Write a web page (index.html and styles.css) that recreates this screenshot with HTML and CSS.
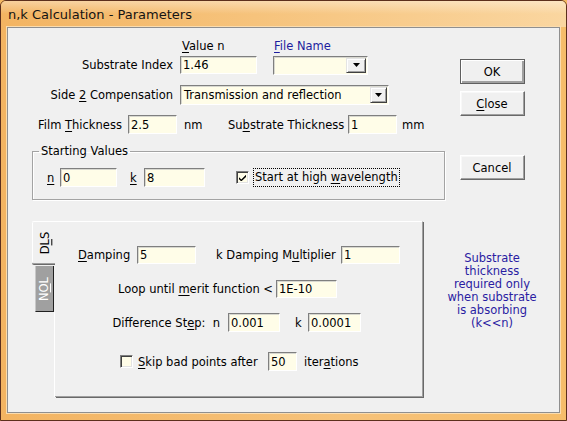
FILE: index.html
```html
<!DOCTYPE html>
<html>
<head>
<meta charset="utf-8">
<title>n,k Calculation - Parameters</title>
<link rel="stylesheet" href="styles.css">
</head>
<body>
<div class="window">
  <div class="titlebar"><span class="title">n,k Calculation - Parameters</span></div>
  <div class="frame">
    <div class="client">
      <div class="main">
        <div class="row r-hdr">
          <span class="lbl"></span>
          <span class="hdr1"><u>V</u>alue n</span>
          <span class="hdr2 blue"><u>F</u>ile Name</span>
        </div>
        <div class="row r-sub">
          <span class="lbl">Substrate Index</span>
          <span class="field w77">1.46</span>
          <span class="combo w95"><span class="ctext"></span><span class="dd"><svg width="7" height="4" viewBox="0 0 7 4"><path d="M0 0h7L3.5 4z" fill="#000"/></svg></span></span>
        </div>
        <div class="row r-side">
          <span class="lbl">Side <u>2</u> Compensation</span>
          <span class="combo w209"><span class="ctext">Transmission and reflection</span><span class="dd"><svg width="7" height="4" viewBox="0 0 7 4"><path d="M0 0h7L3.5 4z" fill="#000"/></svg></span></span>
        </div>
        <div class="row r-film">
          <span class="t-film">Film <u>T</u>hickness</span>
          <span class="field w49">2.5</span>
          <span class="t-nm">nm</span>
          <span class="t-sthick">Su<u>b</u>strate Thickness</span>
          <span class="field w49">1</span>
          <span class="t-mm">mm</span>
        </div>
        <fieldset class="group">
          <legend>Starting Values</legend>
          <div class="row r-start">
            <span class="t-n"><u>n</u></span>
            <span class="field w57">0</span>
            <span class="t-k"><u>k</u></span>
            <span class="field w61">8</span>
            <span class="check on"><svg width="7" height="7" viewBox="0 0 7 7"><path d="M0 3.2l2.3 2.3L7 0.8v2.2L2.3 7.4 0 5.2z" fill="#000"/></svg></span>
            <span class="t-high">Start at high <u>w</u>avelength</span>
          </div>
        </fieldset>
        <div class="tabctl">
          <div class="tabcol">
            <div class="tab tab-dls"><span class="vt">D<u>L</u>S</span></div>
            <div class="tab tab-nol"><span class="vt">N<u>O</u>L</span></div>
            <div class="tab-rest"></div>
          </div>
          <div class="panel">
            <div class="row p1">
              <span class="t-damp"><u>D</u>amping</span>
              <span class="field w59">5</span>
              <span class="t-kdm">k Damping M<u>u</u>ltiplier</span>
              <span class="field w59">1</span>
            </div>
            <div class="row p2">
              <span class="t-loop">Loop until <u>m</u>erit function &lt;</span>
              <span class="field w61">1E-10</span>
            </div>
            <div class="row p3">
              <span class="t-diff">Difference St<u>e</u>p:&nbsp;&nbsp;n</span>
              <span class="field w52">0.001</span>
              <span class="t-k2">k</span>
              <span class="field w53">0.0001</span>
            </div>
            <div class="row p4">
              <span class="check"></span>
              <span class="t-skip"><u>S</u>kip bad points after</span>
              <span class="field w29">50</span>
              <span class="t-iter">iter<u>a</u>tions</span>
            </div>
          </div>
        </div>
      </div>
      <div class="side">
        <button class="btn default b-ok">OK</button>
        <button class="btn b-close"><u>C</u>lose</button>
        <button class="btn b-cancel">Cancel</button>
        <p class="note">Substrate<br>thickness<br>required only<br>when substrate<br>is absorbing<br>(k&lt;&lt;n)</p>
      </div>
    </div>
  </div>
</div>
</body>
</html>
```

FILE: styles.css
```css
* { box-sizing: border-box; }
html, body { margin: 0; padding: 0; }
body {
  width: 567px;
  height: 421px;
  overflow: hidden;
  font-family: "DejaVu Sans", Verdana, sans-serif;
  font-size: 11.5px;
  color: #000;
  background: #f4b862;
}
u { text-decoration: underline; text-underline-offset: 2px; }

.window {
  width: 567px;
  height: 421px;
  border: 1px solid #5c2f1c;
  border-radius: 6px 6px 0 0;
  background: #f4b862;
  display: flex;
  flex-direction: column;
  overflow: hidden;
}
.titlebar {
  height: 26px;
  flex: none;
  display: flex;
  align-items: center;
  padding-left: 7px;
  padding-top: 1px;
  background:
    linear-gradient(to bottom, rgba(255,255,255,0.38), rgba(255,255,255,0) 50%),
    linear-gradient(to right, #f3b462, #f6c37c 45%, #fad6a0);
}
.title { font-size: 13px; color: #141414; }
.frame {
  flex: 1;
  padding: 0 6px 7px 6px;
  display: flex;
  background: linear-gradient(to right, #f3b462, #f6c27a 60%, #f6bd6a);
}
.client {
  flex: 1;
  display: flex;
  background: #f0f0f0;
  border: 1px solid #8f8f8f;
  box-shadow: 0 0 0 1px #fbdcae;
}
.main { width: 434px; flex: none; }
.side { width: 100px; flex: none; display: flex; flex-direction: column; align-items: center; }

.row { display: flex; align-items: center; white-space: nowrap; }
.lbl { width: 172px; padding-right: 7px; text-align: right; flex: none; }
.blue { color: #1d1d9e; }

.r-hdr { margin-top: 11px; height: 13px; }
.hdr1 { width: 93px; padding-left: 2px; }
.hdr2 { padding-left: 1px; }
.r-sub { margin-top: 4px; height: 18px; }
.r-side { margin-top: 11px; height: 20px; }
.r-film { margin-top: 10px; height: 19px; }

.field {
  display: flex;
  align-items: center;
  height: 18px;
  flex: none;
  padding-left: 2px;
  background: #fffde8;
  border: 1px solid;
  border-color: #7f7f7f #ffffff #ffffff #7f7f7f;
  box-shadow: inset 1px 1px #d8d8d0;
}
.r-film .field { height: 19px; }
.w29 { width: 29px; } .w49 { width: 49px; } .w52 { width: 52px; } .w53 { width: 53px; }
.w57 { width: 57px; } .w59 { width: 59px; } .w61 { width: 61px; } .w77 { width: 77px; }

.combo {
  display: flex;
  align-items: center;
  flex: none;
  background: #fffde8;
  border: 1px solid;
  border-color: #7f7f7f #ffffff #ffffff #7f7f7f;
  box-shadow: inset 1px 1px #d8d8d0;
  padding: 1px;
}
.w95 { width: 95px; height: 19px; margin-left: 16px; }
.w209 { width: 209px; height: 20px; }
.ctext { flex: 1; padding-left: 2px; }
.dd {
  width: 17px;
  height: 100%;
  flex: none;
  display: flex;
  align-items: center;
  justify-content: center;
  background: #f0f0f0;
  border: 1px solid;
  border-color: #e4e4e4 #404040 #404040 #e4e4e4;
  box-shadow: inset 1px 1px #fff, inset -1px -1px #a0a0a0;
}
.w95 .dd { width: 20px; }

.t-film { margin-left: 30px; width: 90px; flex: none; }
.t-nm { margin-left: 7px; width: 44px; flex: none; }
.t-sthick { width: 120px; flex: none; }
.t-mm { margin-left: 5px; }

.group {
  margin: 11px 0 0 24px;
  width: 413px;
  height: 55px;
  padding: 0 6px;
  border: 1px solid #a3a3a3;
  box-shadow: inset 1px 1px #fff, 1px 1px #fff;
  min-width: 0;
}
.group legend { padding: 0 2px; line-height: 13px; }
.r-start { margin: 10px 0 0 8px; height: 19px; }
.r-start .field { height: 19px; }
.t-n { width: 13px; flex: none; }
.t-k { margin-left: 13px; width: 14px; flex: none; }
.check {
  width: 13px;
  height: 13px;
  flex: none;
  display: flex;
  align-items: center;
  justify-content: center;
  background: #fffde8;
  border: 1px solid;
  border-color: #7f7f7f #ffffff #ffffff #7f7f7f;
  box-shadow: inset 1px 1px #404040, inset -1px -1px #e3e3e3;
}
.r-start .check { margin-left: 31px; }
.t-high { margin-left: 5px; padding: 1px 1px 2px 1px; outline: 1px dotted #000; outline-offset: 0; }

.tabctl { margin: 21px 0 0 24px; width: 391px; height: 176px; display: flex; }
.tabcol { width: 23px; flex: none; display: flex; flex-direction: column; }
.tab { display: flex; align-items: center; justify-content: center; flex: none; }
.tab-dls {
  height: 43px;
  background: #f0f0f0;
  border-top: 1px solid #fff;
  border-left: 1px solid #fff;
  border-bottom: 1px solid #a0a0a0;
  box-shadow: 0 1px #696969;
  border-radius: 2px 0 0 2px;
}
.tab-nol {
  height: 46px;
  margin: 2px 1px 0 3px;
  background: #a0a0a0;
  color: #fff;
  border-left: 1px solid #c8c8c8;
  border-right: 1px solid #202020;
  border-bottom: 1px solid #202020;
}
.vt { transform: rotate(-90deg); display: inline-block; }
.tab-dls .vt { margin-left: 2px; }
.tab-rest { flex: 1; border-right: 1px solid #fff; }
.panel {
  flex: 1;
  border-top: 1px solid #fff;
  border-right: 1px solid #a0a0a0;
  border-bottom: 1px solid #a0a0a0;
  box-shadow: 1px 1px #696969;
}
.p1 { margin: 24px 0 0 23px; height: 18px; }
.p2 { margin: 16px 0 0 63px; height: 18px; }
.p3 { margin: 15px 0 0 57px; height: 19px; }
.p3 .field { height: 19px; }
.p4 { margin: 20px 0 0 65px; height: 19px; }
.p4 .field { height: 19px; }
.t-damp { width: 59px; flex: none; }
.t-kdm { margin-left: 20px; width: 125px; flex: none; }
.t-loop { width: 158px; flex: none; }
.t-diff { width: 116px; flex: none; text-align: right; padding-right: 8px; }
.t-k2 { margin-left: 15px; width: 13px; flex: none; }
.t-skip { margin-left: 5px; width: 130px; flex: none; }
.t-iter { margin-left: 7px; }

.btn {
  font-family: inherit;
  font-size: 11.5px;
  color: #000;
  width: 65px;
  height: 25px;
  padding: 0;
  background: #f0f0f0;
  border: 1px solid;
  border-color: #fff #696969 #696969 #fff;
  box-shadow: inset -1px -1px #a0a0a0, inset 1px 1px #f8f8f8;
  flex: none;
}
.btn.default {
  border-color: #5f5f5f;
  box-shadow: inset 1px 1px #fff, inset -2px -2px #a0a0a0;
}
.b-ok { margin-top: 31px; }
.b-close { margin-top: 7px; }
.b-cancel { margin-top: 39px; }
.note {
  margin: 72px 0 0 0;
  width: 100px;
  text-align: center;
  line-height: 13px;
  color: #2a1ca2;
}
```
